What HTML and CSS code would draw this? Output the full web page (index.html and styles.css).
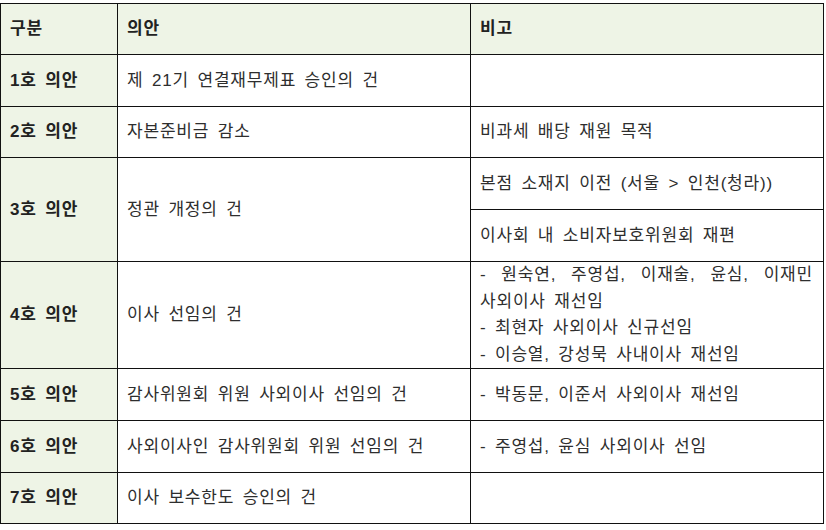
FILE: index.html
```
<!DOCTYPE html>
<html lang="ko">
<head>
<meta charset="utf-8">
<link rel="stylesheet" href="styles.css">
</head>
<body>
<table class="agenda">
  <colgroup>
    <col class="c1">
    <col class="c2">
    <col class="c3">
  </colgroup>
  <tr class="head">
    <td class="k">구분</td>
    <td class="k">의안</td>
    <td class="k">비고</td>
  </tr>
  <tr class="r">
    <td class="k">1호 의안</td>
    <td>제 21기 연결재무제표 승인의 건</td>
    <td></td>
  </tr>
  <tr class="r short">
    <td class="k">2호 의안</td>
    <td>자본준비금 감소</td>
    <td>비과세 배당 재원 목적</td>
  </tr>
  <tr class="r">
    <td class="k" rowspan="2">3호 의안</td>
    <td rowspan="2">정관 개정의 건</td>
    <td>본점 소재지 이전 (서울 &gt; 인천(청라))</td>
  </tr>
  <tr class="r">
    <td>이사회 내 소비자보호위원회 재편</td>
  </tr>
  <tr class="tall">
    <td class="k">4호 의안</td>
    <td>이사 선임의 건</td>
    <td class="multi">
      <div class="just">- 원숙연, 주영섭, 이재술, 윤심, 이재민</div>
      <div>사외이사 재선임</div>
      <div>- 최현자 사외이사 신규선임</div>
      <div>- 이승열, 강성묵 사내이사 재선임</div>
    </td>
  </tr>
  <tr class="r">
    <td class="k">5호 의안</td>
    <td>감사위원회 위원 사외이사 선임의 건</td>
    <td>- 박동문, 이준서 사외이사 재선임</td>
  </tr>
  <tr class="r">
    <td class="k">6호 의안</td>
    <td>사외이사인 감사위원회 위원 선임의 건</td>
    <td>- 주영섭, 윤심 사외이사 선임</td>
  </tr>
  <tr class="r short">
    <td class="k">7호 의안</td>
    <td>이사 보수한도 승인의 건</td>
    <td></td>
  </tr>
</table>
</body>
</html>
```
FILE: styles.css
```
html, body {
  margin: 0;
  padding: 0;
  background: #ffffff;
}
body {
  padding-top: 3px;
  font-family: "Liberation Sans", "Noto Sans CJK KR", sans-serif;
  font-size: 17px;
  color: #2e2e2e;
}
.agenda {
  border-collapse: collapse;
  table-layout: fixed;
  width: 823px;
}
.c1 { width: 117px; }
.c2 { width: 353px; }
.c3 { width: 353px; }
.agenda td {
  border: 1px solid #111111;
  padding: 0 0 0 9px;
  vertical-align: middle;
  line-height: 26px;
  letter-spacing: 0.8px;
  word-spacing: 3px;
  white-space: nowrap;
}
.head td {
  height: 50px;
  background: #eef4e6;
}
.r td {
  height: 51px;
}
.r.short td {
  height: 50px;
}
.tall td {
  height: 105px;
}
.k {
  font-weight: bold;
  color: #222222;
  background: #eef4e6;
}
.agenda td.multi {
  padding-right: 10px;
  line-height: 26.5px;
}
.just {
  text-align: justify;
  text-align-last: justify;
}
```
